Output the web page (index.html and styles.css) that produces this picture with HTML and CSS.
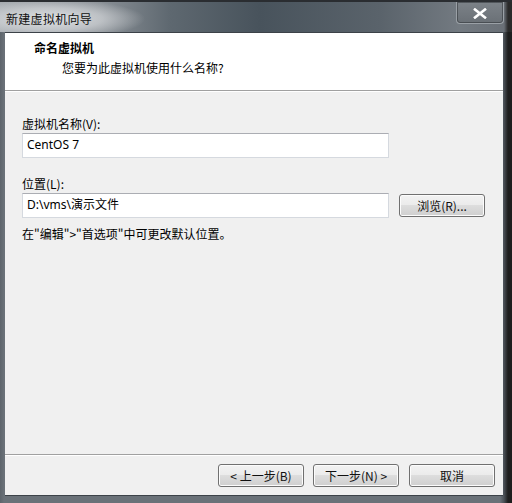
FILE: index.html
```html
<!DOCTYPE html>
<html lang="zh-CN">
<head>
<meta charset="utf-8">
<title>新建虚拟机向导</title>
<link rel="stylesheet" href="styles.css">
</head>
<body>
<div class="window">
  <div class="titlebar">
    <span class="title">新建虚拟机向导</span>
    <div class="close">
      <svg width="14" height="11" viewBox="0 0 14 11"><path d="M2 1.5 L12 9.5 M12 1.5 L2 9.5" stroke="#fff" stroke-width="2.6" stroke-linecap="square"/></svg>
    </div>
  </div>
  <div class="client">
    <div class="header">
      <div class="h-title">命名虚拟机</div>
      <div class="h-sub">您要为此虚拟机使用什么名称?</div>
    </div>
    <div class="body">
      <div class="label">虚拟机名称(V):</div>
      <div class="input">CentOS 7</div>
      <div class="label second">位置(L):</div>
      <div class="row">
        <div class="input">D:\vms\演示文件</div>
        <div class="btn">浏览(R)...</div>
      </div>
      <div class="hint">在"编辑"&gt;"首选项"中可更改默认位置。</div>
    </div>
    <div class="footer">
      <div class="btn">&lt; 上一步(B)</div>
      <div class="btn">下一步(N) &gt;</div>
      <div class="btn cancel">取消</div>
    </div>
  </div>
</div>
</body>
</html>
```
FILE: styles.css
```css
* { box-sizing: border-box; }
html, body { margin: 0; padding: 0; }
body {
  width: 512px;
  height: 503px;
  overflow: hidden;
  background: #1c1c1c;
  font-family: "Noto Sans CJK SC", "Noto Sans", sans-serif;
  font-size: 12px;
  color: #000;
}
.window {
  width: 512px;
  height: 503px;
  display: flex;
  flex-direction: column;
  background: linear-gradient(to right, #5d646b 0px, #6a7178 4px, #6a7178 500px, #4a5056 504px, #1e1e1e 508px);
  border-top: 2px solid #2a2d31;
}
.titlebar {
  height: 30px;
  display: flex;
  justify-content: space-between;
  align-items: flex-start;
  padding-left: 6px;
  padding-right: 8px;
  background:
    radial-gradient(ellipse 95px 20px at 50px 17px, rgba(226,228,230,0.95) 0%, rgba(210,213,216,0.7) 55%, rgba(210,213,216,0) 100%),
    linear-gradient(to right, #a4a9ae 0px, #8a9096 100px, #5e6870 170px, #48535c 260px, #5a636b 380px, #737a81 460px, #6a7077 504px, #2a2a2a 508px);
}
.title {
  margin-top: 9px;
  line-height: 16px;
  color: #111;
  letter-spacing: 0.3px;
}
.close {
  width: 48px;
  height: 22px;
  border: 1px solid #9aa0a6;
  border-top: none;
  border-radius: 0 0 4px 4px;
  background: linear-gradient(#7c8288, #6a7076);
  box-shadow: inset 0 0 0 1px rgba(40,44,48,0.5);
  display: flex;
  align-items: center;
  justify-content: center;
  padding-top: 2px;
}
.client {
  flex: 1;
  margin: 0 9px 7px 5px;
  display: flex;
  flex-direction: column;
  background: #f0f0f0;
  border-top: 1px solid #3c4248;
  border-bottom: 1px solid #3c4248;
}
.header {
  height: 58px;
  background: #fff;
  border-bottom: 1px solid #a0a0a0;
  box-shadow: 0 1px 0 #fff;
  padding: 7px 0 0 29px;
}
.h-title {
  font-weight: bold;
  line-height: 16px;
}
.h-sub {
  margin-top: 4px;
  padding-left: 28px;
  line-height: 16px;
}
.body {
  flex: 1;
  padding: 25px 0 0 17px;
}
.label {
  line-height: 16px;
}
.label.second {
  margin-top: 18px;
}
.input {
  width: 367px;
  height: 25px;
  margin-top: 1px;
  background: #fff;
  border: 1px solid #d5d9df;
  border-top-color: #abadb3;
  padding: 3px 0 0 4px;
  line-height: 16px;
  font-family: "Noto Sans", "Noto Sans CJK SC", sans-serif;
}
.row {
  display: flex;
  align-items: flex-start;
  gap: 10px;
}
.hint {
  margin-top: 8px;
  line-height: 16px;
}
.btn {
  width: 86px;
  height: 23px;
  border: 1px solid #707070;
  border-radius: 3px;
  background: linear-gradient(#f2f2f2 0%, #ebebeb 50%, #dddddd 50%, #cfcfcf 100%);
  box-shadow: inset 0 0 0 1px #fcfcfc;
  display: flex;
  align-items: center;
  justify-content: center;
  line-height: 16px;
  color: #111;
}
.row .btn {
  margin-top: 2px;
}
.footer {
  height: 41px;
  border-top: 1px solid #a0a0a0;
  box-shadow: inset 0 1px 0 #fff;
  display: flex;
  justify-content: flex-end;
  align-items: flex-start;
  padding: 9px 8px 0 0;
  gap: 9px;
}
.footer .cancel {
  margin-left: 1px;
}
```
